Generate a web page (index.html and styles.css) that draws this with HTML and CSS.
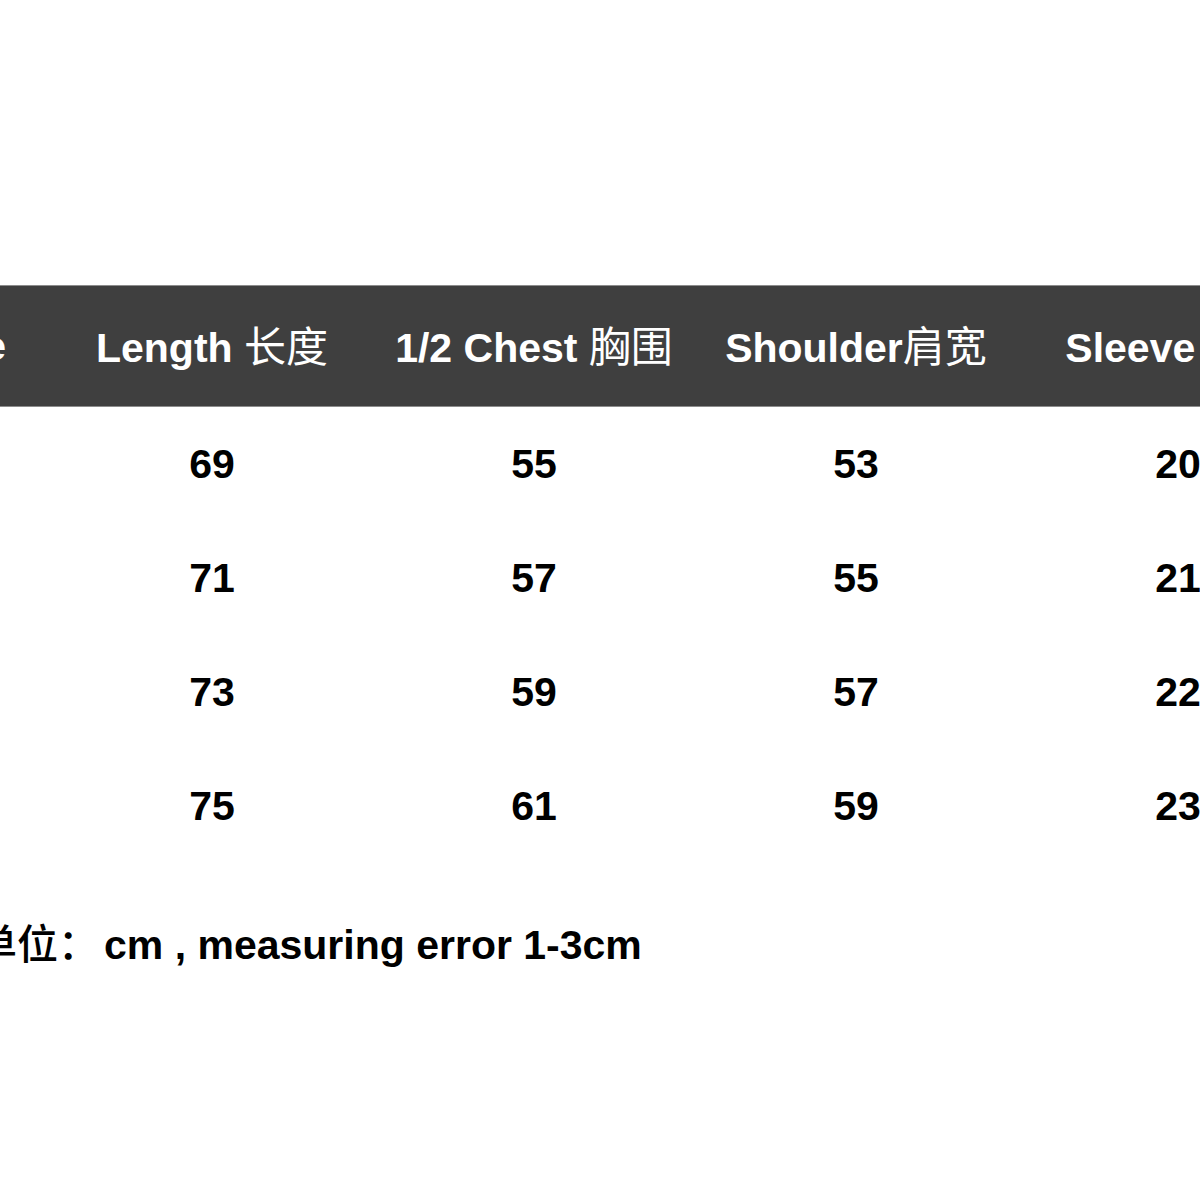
FILE: index.html
```html
<!DOCTYPE html>
<html lang="zh">
<head>
<meta charset="utf-8">
<title>Size chart</title>
<link rel="stylesheet" href="styles.css">
</head>
<body>
<div class="sheet">
  <div class="chart">
    <div class="row head">
      <div class="cell first">Size</div>
      <div class="cell">Length <span class="cjk">长度</span></div>
      <div class="cell">1/2 Chest <span class="cjk">胸围</span></div>
      <div class="cell">Shoulder<span class="cjk">肩宽</span></div>
      <div class="cell">Sleeve <span class="cjk">袖长</span></div>
    </div>
    <div class="row">
      <div class="cell first">S</div>
      <div class="cell">69</div>
      <div class="cell">55</div>
      <div class="cell">53</div>
      <div class="cell">20</div>
    </div>
    <div class="row">
      <div class="cell first">M</div>
      <div class="cell">71</div>
      <div class="cell">57</div>
      <div class="cell">55</div>
      <div class="cell">21</div>
    </div>
    <div class="row">
      <div class="cell first">L</div>
      <div class="cell">73</div>
      <div class="cell">59</div>
      <div class="cell">57</div>
      <div class="cell">22</div>
    </div>
    <div class="row">
      <div class="cell first">XL</div>
      <div class="cell">75</div>
      <div class="cell">61</div>
      <div class="cell">59</div>
      <div class="cell">23</div>
    </div>
  </div>
  <p class="note"><span class="cjk unit">单位：</span>cm , measuring error 1-3cm</p>
</div>
</body>
</html>
```

FILE: styles.css
```css
html, body {
  margin: 0;
  padding: 0;
  background: #ffffff;
  overflow: hidden;
}

body {
  width: 1200px;
  height: 1200px;
  font-family: "Liberation Sans", Arial, sans-serif;
  font-weight: bold;
  color: #000000;
}

.sheet {
  margin-left: -121px;
  padding-top: 285px;
  width: 1460px;
}

.chart {
  display: flex;
  flex-direction: column;
}

.row {
  display: grid;
  grid-template-columns: 172px 322px 322px 322px 322px;
  height: 114px;
  align-items: center;
  font-size: 41px;
}

.row.head {
  height: 120px;
  background: #3f3f3f;
  border-top: 1px solid #8c8c8c;
  border-bottom: 1px solid #8c8c8c;
  color: #ffffff;
}

.cell {
  text-align: center;
  white-space: nowrap;
  line-height: 48px;
}

.cjk {
  font-family: "Noto Sans CJK SC", "Liberation Sans", sans-serif;
  font-weight: 400;
}

.head .cjk {
  font-size: 42px;
}

.note {
  margin: 54px 0 0 0;
  padding-left: 97px;
  font-size: 41px;
  line-height: 48px;
  white-space: nowrap;
}

.note .unit {
  font-weight: 500;
  margin-right: 5px;
}
```
